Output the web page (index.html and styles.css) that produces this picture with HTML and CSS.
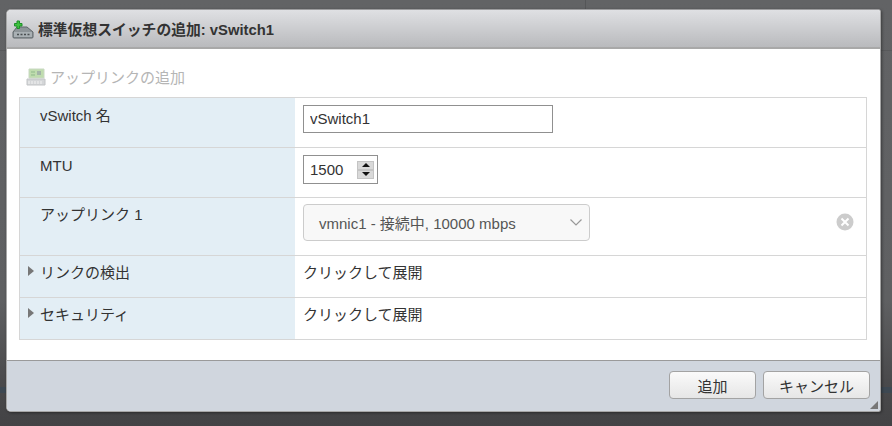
FILE: index.html
```html
<!DOCTYPE html>
<html>
<head>
  <title>標準仮想スイッチの追加</title>
  <link rel="stylesheet" href="styles.css">
</head>
<body>
  <div class="backdrop-line-v"></div>
  <div class="backdrop-line-h"></div>
  <div class="backdrop-band"></div>

  <div class="dialog">
    <div class="dialog-title">
      <svg class="title-icon" width="22" height="20" viewBox="0 0 22 20">
        <path d="M5 8h10l6 5v5a1 1 0 0 1-1 1H2a1 1 0 0 1-1-1v-5z" fill="#8d9498" stroke="#5f666a" stroke-width="1"/>
        <path d="M2 13h18v5H2z" fill="#a9b0b4"/>
        <path d="M5 15.500h2M8.500 15.500h2M12 15.500h2M15.500 15.500h2" stroke="#4a4f52" stroke-width="1.500"/>
        <path d="M5 2h2.500v2.500H10V7H7.500v2.500H5V7H2.500V4.500H5z" fill="#3fc23f" stroke="#1f8f2a" stroke-width="1"/>
      </svg>
      <span>標準仮想スイッチの追加: vSwitch1</span>
    </div>

    <div class="dialog-body">
      <div class="toolbar">
        <svg class="toolbar-icon" width="20" height="18" viewBox="0 0 20 18">
          <path d="M3 1h15v9H3z" fill="#bfdcae" stroke="#c9d8c2"/>
          <path d="M11 3h4v4h-4z" fill="#a3b4a8"/>
          <path d="M5 4h4M5 7h4" stroke="#8fb98a"/>
          <path d="M1 11h18v6H1z" fill="#d4d6d8" stroke="#c2c4c6"/>
          <path d="M3 13v3M6 13v3M9 13v3M12 13v3M15 13v3" stroke="#f2f2f2"/>
        </svg>
        <span>アップリンクの追加</span>
      </div>

      <div class="form-table">
        <div class="form-row row-name">
          <div class="row-label">vSwitch 名</div>
          <div class="row-value"><input class="text-input" type="text" value="vSwitch1"></div>
        </div>
        <div class="form-row row-mtu">
          <div class="row-label">MTU</div>
          <div class="row-value">
            <div class="spinner">
              <span class="spinner-value">1500</span>
              <span class="spinner-buttons">
                <span class="spin-btn"><i class="arrow-up"></i></span>
                <span class="spin-btn"><i class="arrow-down"></i></span>
              </span>
            </div>
          </div>
        </div>
        <div class="form-row row-uplink">
          <div class="row-label">アップリンク 1</div>
          <div class="row-value uplink-value">
            <div class="select-box">
              <span>vmnic1 - 接続中, 10000 mbps</span>
              <svg width="12" height="7" viewBox="0 0 12 7"><path d="M.5.500 6 6l5.500-5.500" fill="none" stroke="#999" stroke-width="1.200"/></svg>
            </div>
            <svg class="remove-icon" width="18" height="18" viewBox="0 0 18 18">
              <circle cx="9" cy="9" r="8.500" fill="#ccc"/>
              <path d="M5.500 5.500l7 7M12.500 5.500l-7 7" stroke="#fff" stroke-width="2"/>
            </svg>
          </div>
        </div>
        <div class="form-row row-expand">
          <div class="row-label"><i class="caret"></i>リンクの検出</div>
          <div class="row-value">クリックして展開</div>
        </div>
        <div class="form-row row-expand">
          <div class="row-label"><i class="caret"></i>セキュリティ</div>
          <div class="row-value">クリックして展開</div>
        </div>
      </div>
    </div>

    <div class="dialog-footer">
      <button class="btn btn-add">追加</button>
      <button class="btn btn-cancel">キャンセル</button>
      <svg class="resize-grip" width="8" height="8" viewBox="0 0 8 8"><path d="M8 0v8H0z" fill="#777"/></svg>
    </div>
  </div>
</body>
</html>
```

FILE: styles.css
```css
html, body {
  margin: 0;
  height: 426px;
  overflow: hidden;
}

body {
  position: relative;
  background: linear-gradient(#626365 0, #5f6062 300px, #4a4a4c 380px, #434345 426px);
  font-family: "Liberation Sans", "Noto Sans CJK JP", sans-serif;
  font-size: 15px;
  color: #333;
  padding-top: 9px;
  box-sizing: border-box;
}

.backdrop-line-v {
  position: absolute;
  left: 585px;
  top: 0;
  width: 1px;
  height: 9px;
  background: #555658;
}

.backdrop-line-h {
  position: absolute;
  left: 0;
  top: 50px;
  width: 892px;
  height: 1px;
  background: #58595b;
}

.backdrop-band {
  position: absolute;
  left: 0;
  top: 387px;
  width: 892px;
  height: 6px;
  background: #3d4852;
}

.dialog {
  position: relative;
  width: 875px;
  height: 403px;
  margin-left: 6px;
  border: 1px solid #a6a6a6;
  border-top-color: #9c9c9e;
  border-radius: 5px 3px 3px 5px;
  box-sizing: border-box;
  background: #fff;
  display: flex;
  flex-direction: column;
  overflow: hidden;
  box-shadow: 1px 1px 3px rgba(0, 0, 0, 0.4);
}

.dialog-title {
  height: 37px;
  flex: none;
  display: flex;
  align-items: center;
  padding-left: 5px;
  gap: 4px;
  background: linear-gradient(#dfe0e3, #b9babd);
  border-bottom: 2px solid #a8a8a8;
  box-sizing: content-box;
  font-weight: bold;
  font-size: 14.8px;
  color: #333;
}

.title-icon {
  margin-top: 1px;
}

.dialog-body {
  flex: 1;
  padding: 0 12px;
}

.toolbar {
  height: 48px;
  display: flex;
  align-items: center;
  padding: 7px 0 0 7px;
  box-sizing: border-box;
  gap: 4px;
  color: #b5b5b5;
}

.form-table {
  border: 1px solid #d6d6d6;
  width: 848px;
  box-sizing: border-box;
}

.form-row {
  display: flex;
  border-bottom: 1px solid #d6d6d6;
}

.form-row:last-child {
  border-bottom: 0;
  height: 41px;
}

.row-name,
.row-mtu {
  height: 50px;
  box-sizing: border-box;
}

.row-uplink {
  height: 58px;
  box-sizing: border-box;
}

.row-expand {
  height: 42px;
  box-sizing: border-box;
}

.row-label {
  width: 275px;
  flex: none;
  background: #e3eef5;
  padding: 6px 0 0 20px;
  box-sizing: border-box;
  color: #333;
  position: relative;
}

.row-mtu .row-label {
  padding-top: 9px;
}

.row-uplink .row-label,
.row-expand .row-label {
  padding-top: 5px;
}

.caret {
  position: absolute;
  left: 8px;
  top: 10px;
  width: 0;
  height: 0;
  border-left: 6px solid #777;
  border-top: 5px solid transparent;
  border-bottom: 5px solid transparent;
}

.row-value {
  flex: 1;
  padding: 7px 0 0 8px;
  color: #333;
}

.row-expand .row-value {
  padding-top: 5px;
}

.row-uplink .row-value {
  padding-top: 6px;
}

.text-input {
  width: 250px;
  height: 28px;
  box-sizing: border-box;
  border: 1px solid #909090;
  padding: 0 6px 2px;
  font: inherit;
  color: #333;
  display: block;
}

.spinner {
  width: 75px;
  height: 29px;
  box-sizing: border-box;
  border: 1px solid #909090;
  display: flex;
  align-items: center;
  justify-content: space-between;
  padding: 0 3px 0 6px;
}

.spinner-value {
  margin-top: -1px;
}

.spinner-buttons {
  display: flex;
  flex-direction: column;
  width: 17px;
}

.spin-btn {
  height: 7px;
  background: #d9d9d9;
  border: 1px solid #c4c4c4;
  display: flex;
  align-items: center;
  justify-content: center;
}

.arrow-up {
  border-left: 4px solid transparent;
  border-right: 4px solid transparent;
  border-bottom: 4px solid #111;
}

.arrow-down {
  border-left: 4px solid transparent;
  border-right: 4px solid transparent;
  border-top: 4px solid #111;
}

.uplink-value {
  display: flex;
  align-items: flex-start;
}

.select-box {
  width: 287px;
  height: 37px;
  box-sizing: border-box;
  border: 1px solid #ccc;
  border-radius: 4px;
  background: #f8f8f8;
  color: #555;
  padding: 0 7px 0 15px;
  display: flex;
  align-items: center;
  justify-content: space-between;
}

.remove-icon {
  margin: 9px 0 0 246px;
}

.btn {
  height: 28px;
  box-sizing: border-box;
  border: 1px solid #a3a3a3;
  border-radius: 4px;
  background: linear-gradient(#fafafa, #e6e6e6);
  font: inherit;
  color: #333;
  padding: 0;
}

.btn-add {
  width: 87px;
}

.btn-cancel {
  width: 107px;
}

.dialog-footer {
  height: 51px;
  flex: none;
  box-sizing: border-box;
  background: #d0d6de;
  border-top: 1px solid #9a9a9a;
  display: flex;
  justify-content: flex-end;
  gap: 7px;
  padding: 10px 10px 0 0;
  position: relative;
}

.resize-grip {
  position: absolute;
  right: 2px;
  bottom: 2px;
}
```
